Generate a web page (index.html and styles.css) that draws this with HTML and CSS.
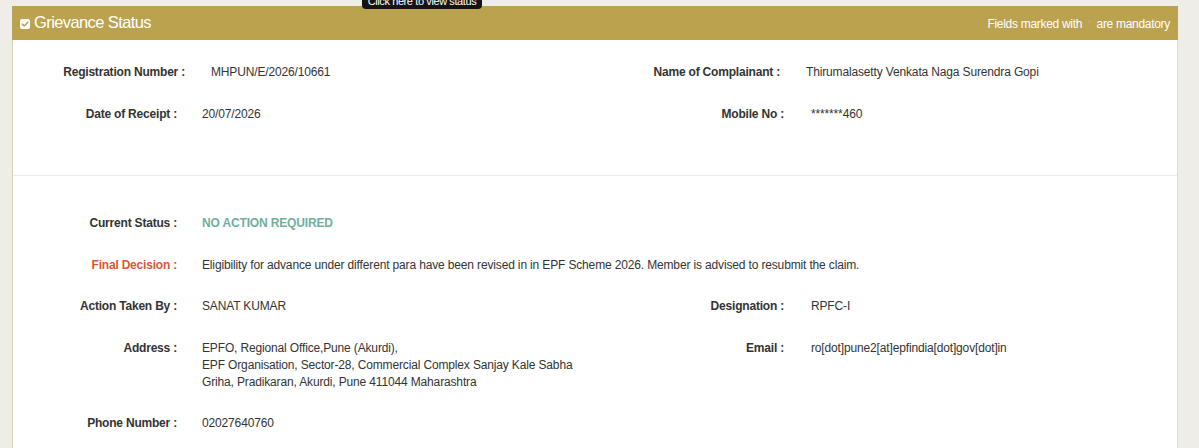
FILE: index.html
```html
<!DOCTYPE html>
<html>
<head>
<meta charset="utf-8">
<link rel="stylesheet" href="styles.css">
</head>
<body>
<div class="panel">
  <div class="panel-head">
    <div class="title">
      <svg class="chk" width="10" height="10" viewBox="0 0 10 10"><rect x="0" y="0" width="10" height="10" rx="2" fill="#fff"/><path d="M2.3 5.1 L4.2 7 L7.8 3.2" fill="none" stroke="#b9a04e" stroke-width="1.6" stroke-linecap="round" stroke-linejoin="round"/></svg>
      <span>Grievance Status</span>
    </div>
    <div class="mand">Fields marked with <span class="star">*</span> are mandatory</div>
    <div class="tip">Click here to view status</div>
  </div>
  <div class="section top">
    <div class="row first">
      <div class="lbl">Registration Number :</div>
      <div class="val">MHPUN/E/2026/10661</div>
      <div class="lbl">Name of Complainant :</div>
      <div class="val r">Thirumalasetty Venkata Naga Surendra Gopi</div>
    </div>
    <div class="row">
      <div class="lbl">Date of Receipt :</div>
      <div class="val">20/07/2026</div>
      <div class="lbl">Mobile No :</div>
      <div class="val r">*******460</div>
    </div>
  </div>
  <div class="section bottom">
    <div class="row">
      <div class="lbl">Current Status :</div>
      <div class="val status">NO ACTION REQUIRED</div>
    </div>
    <div class="row">
      <div class="lbl red">Final Decision :</div>
      <div class="val wide">Eligibility for advance under different para have been revised in in EPF Scheme 2026. Member is advised to resubmit the claim.</div>
    </div>
    <div class="row">
      <div class="lbl">Action Taken By :</div>
      <div class="val">SANAT KUMAR</div>
      <div class="lbl">Designation :</div>
      <div class="val r">RPFC-I</div>
    </div>
    <div class="row">
      <div class="lbl">Address :</div>
      <div class="val">EPFO, Regional Office,Pune (Akurdi),<br>EPF Organisation, Sector-28, Commercial Complex Sanjay Kale Sabha<br>Griha, Pradikaran, Akurdi, Pune 411044 Maharashtra</div>
      <div class="lbl">Email :</div>
      <div class="val r">ro[dot]pune2[at]epfindia[dot]gov[dot]in</div>
    </div>
    <div class="row">
      <div class="lbl">Phone Number :</div>
      <div class="val">02027640760</div>
    </div>
  </div>
</div>
</body>
</html>
```
FILE: styles.css
```css
html, body {
  margin: 0;
  padding: 0;
  background: #efede8;
  font-family: "Liberation Sans", Arial, sans-serif;
  color: #333;
  overflow: hidden;
}
.panel {
  margin: 6px 0 0 12px;
  width: 1166px;
  background: #fff;
  border-left: 1px solid #d9d0b4;
  border-right: 1px solid #e2dccb;
  box-sizing: border-box;
  min-height: 460px;
}
.panel-head {
  position: relative;
  height: 34px;
  background: #bba24e;
  margin: 0 -1px;
  display: flex;
  align-items: center;
  justify-content: space-between;
  padding: 0 8px;
  color: #fff;
}
.title {
  display: flex;
  align-items: center;
  gap: 4px;
  font-size: 16.5px;
  letter-spacing: -0.6px;
  padding-bottom: 2px;
}
.chk {
  margin-top: 4px;
}
.mand {
  font-size: 12px;
  letter-spacing: -0.3px;
  padding-top: 1px;
}
.star {
  color: #c8a474;
  padding: 0 2px;
}
.tip {
  position: absolute;
  left: 350px;
  top: -14px;
  width: 120px;
  height: 17px;
  background: #141414;
  border-radius: 4px;
  color: #fff;
  font-size: 11px;
  line-height: 18px;
  letter-spacing: -0.4px;
  text-align: center;
  white-space: nowrap;
}
.section {
  font-size: 12px;
  line-height: 17px;
  letter-spacing: -0.15px;
}
.section.top {
  padding: 12px 0 40px;
  border-bottom: 1px solid #ebebeb;
}
.section.bottom {
  padding-top: 27px;
}
.row {
  display: grid;
  grid-template-columns: 165px 442px 165px 1fr;
  padding: 12.25px 0;
}
.row.first {
  grid-template-columns: 173px 434px 161px 1fr;
}
.lbl {
  text-align: right;
  font-weight: bold;
  letter-spacing: -0.2px;
  padding-right: 1px;
  color: #333;
}
.val {
  padding-left: 24px;
  color: #333;
}
.row.first .val {
  padding-left: 25px;
}
.val.r {
  padding-left: 26px;
}
.row.first .val.r {
  padding-left: 25px;
}
.val.wide {
  grid-column: 2 / 5;
}
.val.status {
  color: #6faf9c;
  font-weight: bold;
}
.lbl.red {
  color: #db5636;
}
```
